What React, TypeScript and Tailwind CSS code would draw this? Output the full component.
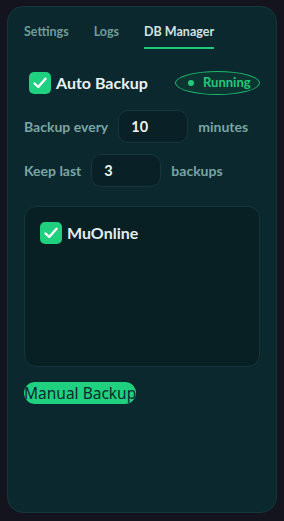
import React from "react";

function Check() {
  return (
    <span className="flex h-[22px] w-[22px] shrink-0 items-center justify-center rounded-[5px] bg-[#1fd07e]">
      <svg width="16" height="16" viewBox="0 0 16 16" fill="none">
        <path d="M2.5 8.5 L6.2 12 L13.5 3.8" stroke="white" strokeWidth="2.4" strokeLinecap="round" strokeLinejoin="round" />
      </svg>
    </span>
  );
}

export default function App() {
  return (
    <div
      className="min-h-[521px] w-full bg-[#14141e] px-[7px] pt-[6px] pb-[9px]"
      style={{ fontFamily: 'Lato, sans-serif' }}
    >
      <div className="flex h-[507px] flex-col rounded-[16px] border border-[#12383e] bg-[#0b282e] px-[16px]">
        <div className="flex gap-[25px] pt-[16px] text-[12.5px] font-bold leading-[18px]">
          <div className="text-[#6f9c99] pb-[8px]">Settings</div>
          <div className="text-[#6f9c99] pb-[8px]">Logs</div>
          <div className="text-[#d2e2e1] pb-[6px] border-b-2 border-[#22c97a]">DB Manager</div>
        </div>

        <div className="mt-[22px] flex items-center justify-between pl-[5px]">
          <div className="flex items-center gap-[5px]">
            <Check />
            <span className="text-[16px] font-bold text-[#eaf2f1]">Auto Backup</span>
          </div>
          <div className="flex h-[24px] w-[85px] items-center gap-[9px] rounded-[50%] border border-[#1db86f] bg-[#0c3431] pl-[12px]">
            <span className="h-[6px] w-[6px] rounded-full bg-[#22c97a]" />
            <span className="text-[13px] font-bold text-[#22c97a]">Running</span>
          </div>
        </div>

        <div className="mt-[15px] flex items-center gap-[10px]">
          <span className="text-[14px] font-bold text-[#7aa5a2]">Backup every</span>
          <div className="flex h-[33px] w-[70px] items-center rounded-[10px] border border-[#15363b] bg-[#092026] pl-[12px] text-[14.5px] font-bold text-[#eef5f4]">
            10
          </div>
          <span className="text-[14px] font-bold text-[#7aa5a2]">minutes</span>
        </div>

        <div className="mt-[11px] flex items-center gap-[10px]">
          <span className="text-[14px] font-bold text-[#7aa5a2]">Keep last</span>
          <div className="flex h-[33px] w-[70px] items-center rounded-[10px] border border-[#15363b] bg-[#092026] pl-[12px] text-[14.5px] font-bold text-[#eef5f4]">
            3
          </div>
          <span className="text-[14px] font-bold text-[#7aa5a2]">backups</span>
        </div>

        <div className="mt-[19px] h-[161px] w-[236px] rounded-[12px] border border-[#12363b] bg-[#081f24] px-[15px] pt-[14px]">
          <div className="flex items-center gap-[5px]">
            <Check />
            <span className="text-[16px] font-bold text-[#e3eeed]">MuOnline</span>
          </div>
        </div>

        <div className="mt-[15px] flex">
          <button
            className="h-[22px] rounded-full bg-[#1fd07e] text-[15.5px] leading-[22px] text-[#0b2a2f]"
            style={{ fontFamily: '"Noto Sans", sans-serif' }}
          >
            Manual Backup
          </button>
        </div>
      </div>
    </div>
  );
}
